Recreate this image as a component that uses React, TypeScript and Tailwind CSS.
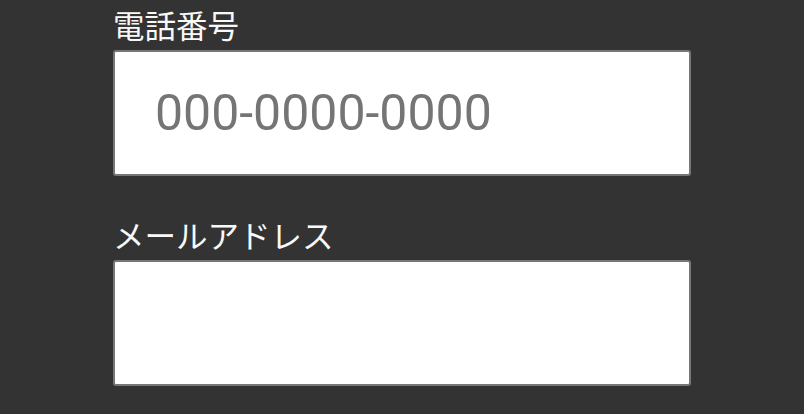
export default function App() {
  return (
    <div className="min-h-screen bg-[#333333] pt-1">
      <form className="w-[578px] mx-auto flex flex-col font-['Noto_Sans_CJK_JP',sans-serif]">
        <label htmlFor="tel" className="text-[31.5px] leading-[40px] mb-[6px] text-[#f8f8f8]">
          電話番号
        </label>
        <input
          id="tel"
          type="tel"
          placeholder="000-0000-0000"
          className="h-[126px] w-full bg-white border-2 border-[#767676] rounded-[3px] pl-10 text-[50px] font-['Roboto',sans-serif] text-[#333] placeholder:text-[#757575] outline-none"
        />
        <label htmlFor="mail" className="mt-[38px] text-[31.5px] leading-[40px] mb-[6px] text-[#f8f8f8]">
          メールアドレス
        </label>
        <input
          id="mail"
          type="email"
          className="h-[126px] w-full bg-white border-2 border-[#767676] rounded-[3px] pl-10 text-[50px] font-['Roboto',sans-serif] text-[#333] outline-none"
        />
      </form>
    </div>
  );
}
